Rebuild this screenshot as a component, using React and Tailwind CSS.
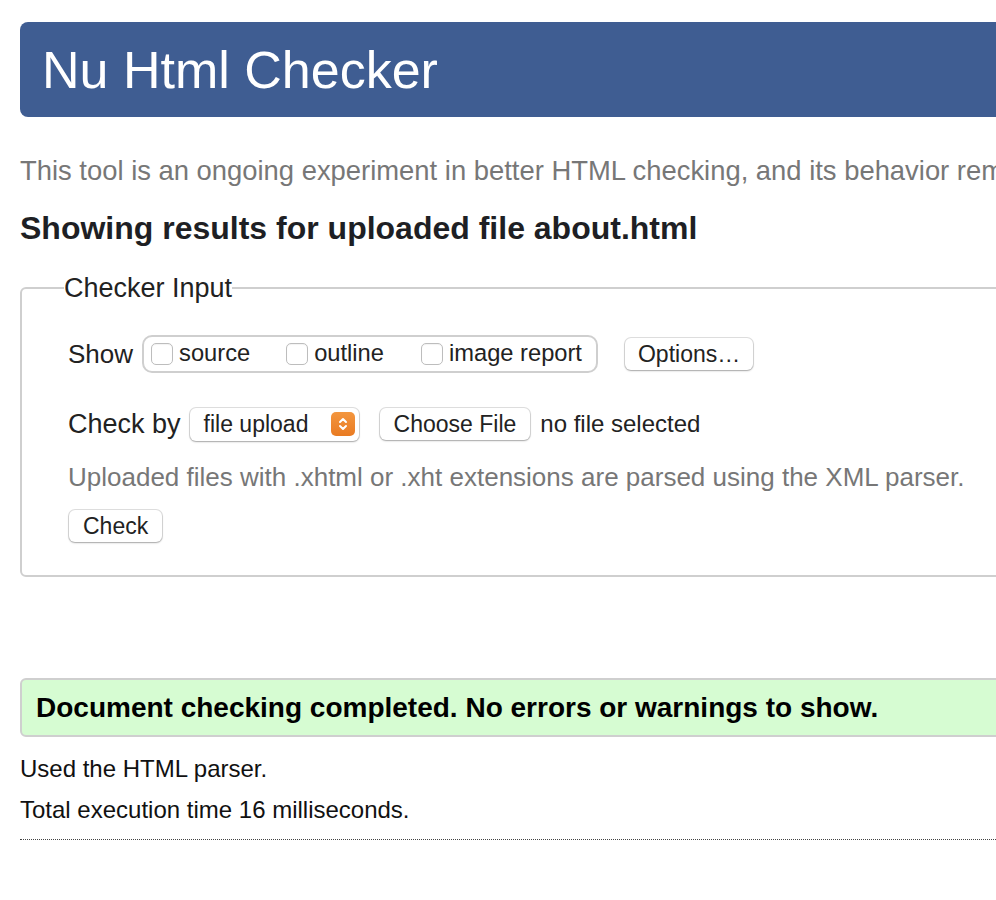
export default function App() {
  const Checkbox = () => (
    <span className="inline-block w-[22px] h-[22px] rounded-[5px] border border-[#bdbdbd] bg-white shadow-[inset_0_1px_1px_rgba(0,0,0,0.05)]" />
  );
  const btn =
    "inline-flex items-center bg-white rounded-[6px] shadow-[0_0_0_1px_rgba(0,0,0,0.12),0_1px_2px_rgba(0,0,0,0.25)] text-[#222] text-[23px]";
  return (
    <div className="w-[996px] h-[900px] overflow-hidden bg-white font-['Liberation_Sans',Arial,sans-serif]">
      <div className="w-[1300px] pl-[20px]">
        <div className="mt-[22px] h-[95px] rounded-[8px] bg-[#3f5d92] flex items-center pl-[22px]">
          <h1 className="text-[52px] leading-none text-white">Nu Html Checker</h1>
        </div>
        <p className="mt-[38px] text-[27.4px] leading-[32px] text-[#777] whitespace-nowrap">
          This tool is an ongoing experiment in better HTML checking, and its behavior remains subject to change
        </p>
        <h2 className="mt-[23px] text-[32px] leading-[36px] font-bold text-[#1e1f24] whitespace-nowrap">
          Showing results for uploaded file about.html
        </h2>
        <fieldset className="mt-[27px] border-2 border-[#cfcfcf] rounded-[6px] pl-[46px] pb-[33px] text-[#222]">
          <legend className="ml-[-4px] text-[27px] leading-[30px] px-0">Checker Input</legend>
          <div className="mt-[31px] h-[40px] flex items-center">
            <span className="text-[26px]">Show</span>
            <div className="ml-[9px] h-[38px] flex items-center border-2 border-[#cfcfcf] rounded-[10px] pl-[7px] pr-[14px] text-[23.7px]">
              <Checkbox />
              <span className="ml-[6px]">source</span>
              <span className="ml-[36px] flex items-center">
                <Checkbox />
              </span>
              <span className="ml-[6px]">outline</span>
              <span className="ml-[37px] flex items-center">
                <Checkbox />
              </span>
              <span className="ml-[6px]">image report</span>
            </div>
            <button className={btn + " ml-[27px] h-[32px] px-[13px]"}>Options…</button>
          </div>
          <div className="mt-[30px] h-[40px] flex items-center">
            <span className="text-[27px]">Check by</span>
            <div className={btn + " ml-[9px] h-[33px] w-[169px] pl-[14px] pr-[4px] justify-between text-[23.7px]"}>
              <span>file upload</span>
              <span className="w-[24px] h-[24px] rounded-[5px] bg-gradient-to-b from-[#f3963e] to-[#e97b22] flex items-center justify-center">
                <svg width="12" height="18" viewBox="0 0 12 18" fill="none" stroke="white" strokeWidth="2" strokeLinecap="round" strokeLinejoin="round">
                  <path d="M3 7 L6 4 L9 7" />
                  <path d="M3 11 L6 14 L9 11" />
                </svg>
              </span>
            </div>
            <button className={btn + " ml-[21px] h-[32px] px-[14px]"}>Choose File</button>
            <span className="ml-[10px] text-[24px]">no file selected</span>
          </div>
          <p className="mt-[17px] h-[32px] leading-[32px] text-[26px] text-[#777] whitespace-nowrap">
            Uploaded files with .xhtml or .xht extensions are parsed using the XML parser.
          </p>
          <button className={btn + " mt-[17px] ml-[1px] h-[32px] px-[14px]"}>Check</button>
        </fieldset>
        <div className="mt-[101px] h-[59px] flex items-center bg-[#d6fcd2] border-2 border-[#cfcfcf] rounded-[6px] pl-[14px]">
          <p className="text-[28px] font-bold text-black whitespace-nowrap">
            Document checking completed. No errors or warnings to show.
          </p>
        </div>
        <p className="mt-[17px] leading-[30px] text-[24px] text-[#111]">Used the HTML parser.</p>
        <p className="mt-[11px] leading-[30px] text-[24px] text-[#111]">Total execution time 16 milliseconds.</p>
        <div className="mt-[14px] border-t border-dotted border-[#444]" />
      </div>
    </div>
  );
}
